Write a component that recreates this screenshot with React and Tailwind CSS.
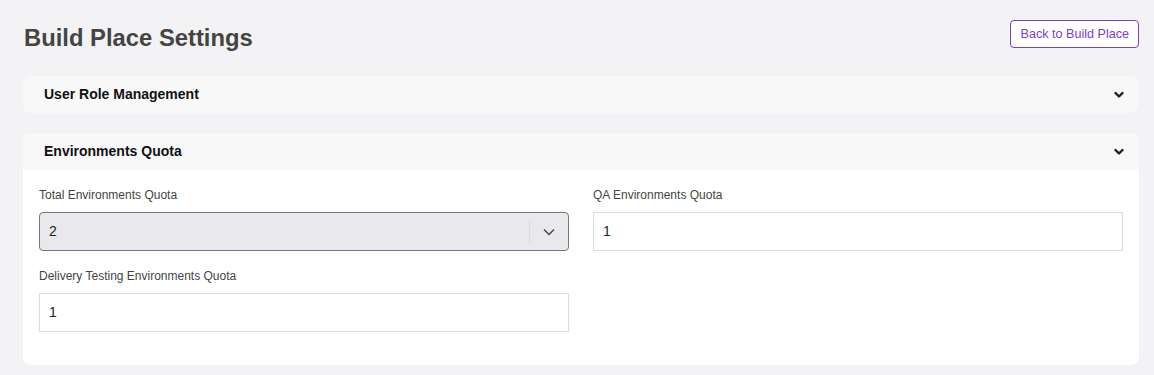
import React from "react";

function BoldChevron() {
  return (
    <svg width="10" height="8" viewBox="0 0 10 8" className="block">
      <path d="M1.5 2 L5 5.5 L8.5 2" fill="none" stroke="#1f1f1f" strokeWidth="2.4" strokeLinecap="round" strokeLinejoin="round" />
    </svg>
  );
}

function Field({ label, children }) {
  return (
    <div className="flex flex-col">
      <div className="text-[12px] leading-[14px] text-[#444] mb-[10px] mt-[1px]">{label}</div>
      {children}
    </div>
  );
}

function TextBox({ value }) {
  return (
    <div className="h-[39px] border border-[#dcdcdc] bg-white flex items-center px-[9px] text-[14px] text-[#222]">
      {value}
    </div>
  );
}

export default function App() {
  return (
    <div className="min-h-[375px] bg-[#f3f2f4] pl-[23px] pr-[15px] pt-[20px] pb-[11px]" style={{ fontFamily: '"Liberation Sans", Arial, sans-serif' }}>
      <div className="flex justify-between items-start">
        <h1 className="text-[23.8px] leading-[28px] font-bold text-[#444] mt-[4px] ml-[1px]">Build Place Settings</h1>
        <button className="h-[28px] px-[9px] border border-[#7b3fc4] rounded-[4px] bg-white text-[12.6px] text-[#7b3fc4]">
          Back to Build Place
        </button>
      </div>

      <div className="mt-[24px] rounded-[8px] bg-[#f8f8f9] h-[37px] flex items-center justify-between pl-[21px] pr-[15px]">
        <span className="text-[14px] font-bold text-[#111]">User Role Management</span>
        <BoldChevron />
      </div>

      <div className="mt-[20px] rounded-[8px] bg-white overflow-hidden">
        <div className="bg-[#f8f8f9] h-[37px] flex items-center justify-between pl-[21px] pr-[15px]">
          <span className="text-[14px] font-bold text-[#111]">Environments Quota</span>
          <BoldChevron />
        </div>
        <div className="px-[16px] pt-[17px] pb-[33px] grid grid-cols-2 gap-x-[24px] gap-y-[17px]">
          <Field label="Total Environments Quota">
            <div className="h-[39px] border border-[#767676] rounded-[4px] bg-[#e9e9ed] flex items-center text-[14px] text-[#222]">
              <span className="flex-1 pl-[9px]">2</span>
              <div className="w-px h-[22px] bg-[#dadade]" />
              <div className="w-[38px] flex items-center justify-center">
                <svg width="12" height="8" viewBox="0 0 12 8">
                  <path d="M1 1.5 L6 6.5 L11 1.5" fill="none" stroke="#444" strokeWidth="1.4" />
                </svg>
              </div>
            </div>
          </Field>
          <Field label="QA Environments Quota">
            <TextBox value="1" />
          </Field>
          <Field label="Delivery Testing Environments Quota">
            <TextBox value="1" />
          </Field>
        </div>
      </div>
    </div>
  );
}
